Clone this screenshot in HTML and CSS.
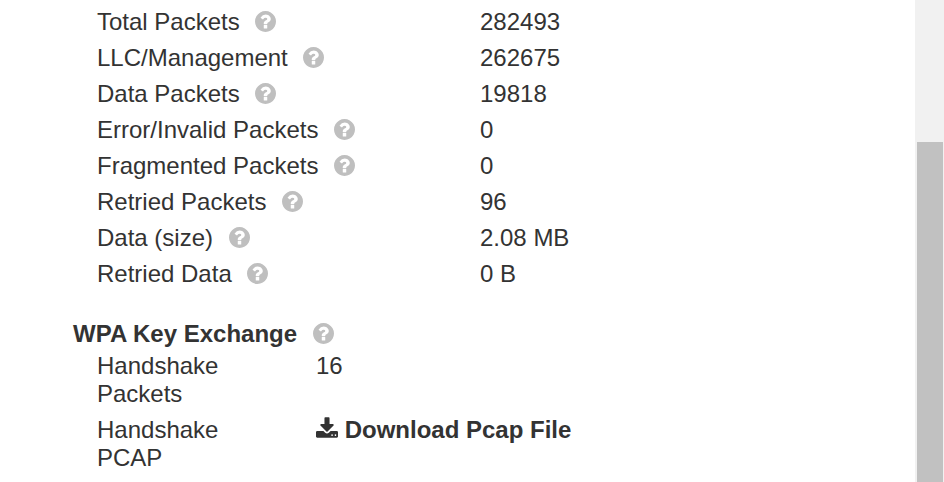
FILE: index.html
```html
<!DOCTYPE html>
<html lang="en">
<head>
<meta charset="utf-8">
<title>Device Details</title>
<link rel="stylesheet" href="styles.css">
</head>
<body>
<svg class="sprite" aria-hidden="true">
  <symbol id="help" viewBox="0 0 1536 1536"><path d="M896 1248v-192q0-14-9-23t-23-9H672q-14 0-23 9t-9 23v192q0 14 9 23t23 9h192q14 0 23-9t9-23zm256-672q0-88-55.500-163t-138.500-116-170-41q-243 0-371 213-15 24 8 42l132 100q7 6 19 6 16 0 25-12 53-68 86-92 34-24 86-24 48 0 85.500 26t37.500 59q0 38-20 61t-68 45q-63 28-115.500 86.500T640 892v36q0 14 9 23t23 9h192q14 0 23-9t9-23q0-19 21.500-49.500T972 829q32-18 49-28.500t46-35 44.500-48 28-60.500 12.500-81zm384 192q0 209-103 385.500T1153.500 1433 768 1536t-385.500-103T103 1153.500 0 768t103-385.500T382.500 103 768 0t385.500 103T1433 382.500 1536 768z"/></symbol>
  <symbol id="download" viewBox="0 -128 1664 1536"><path d="M1280 1216q0-26-19-45t-45-19-45 19-19 45 19 45 45 19 45-19 19-45zm256 0q0-26-19-45t-45-19-45 19-19 45 19 45 45 19 45-19 19-45zm128-224v320q0 40-28 68t-68 28H96q-40 0-68-28t-28-68V992q0-40 28-68t68-28h465l135 136q58 56 136 56t136-56l136-136h464q40 0 68 28t28 68zm-325-569q17 41-14 70l-448 448q-18 19-45 19t-45-19L339 493q-31-29-14-70 17-39 59-39h256V-64q0-26 19-45t45-19h256q26 0 45 19t19 45v448h256q42 0 59 39z"/></symbol>
</svg>
<main class="panel">
  <table class="stats">
    <tbody>
      <tr><th scope="row">Total Packets <svg class="help"><use href="#help"/></svg></th><td>282493</td></tr>
      <tr><th scope="row">LLC/Management <svg class="help"><use href="#help"/></svg></th><td>262675</td></tr>
      <tr><th scope="row">Data Packets <svg class="help"><use href="#help"/></svg></th><td>19818</td></tr>
      <tr><th scope="row">Error/Invalid Packets <svg class="help"><use href="#help"/></svg></th><td>0</td></tr>
      <tr><th scope="row">Fragmented Packets <svg class="help"><use href="#help"/></svg></th><td>0</td></tr>
      <tr><th scope="row">Retried Packets <svg class="help"><use href="#help"/></svg></th><td>96</td></tr>
      <tr><th scope="row">Data (size) <svg class="help"><use href="#help"/></svg></th><td>2.08 MB</td></tr>
      <tr><th scope="row">Retried Data <svg class="help"><use href="#help"/></svg></th><td>0 B</td></tr>
    </tbody>
  </table>
  <h2 class="heading">WPA Key Exchange <svg class="help"><use href="#help"/></svg></h2>
  <table class="stats exchange">
    <tbody>
      <tr><th scope="row">Handshake Packets</th><td>16</td></tr>
      <tr><th scope="row">Handshake PCAP</th><td><a class="download" href="#pcap"><svg class="save"><use href="#download"/></svg> Download Pcap File</a></td></tr>
    </tbody>
  </table>
</main>
<div class="scrollbar" aria-hidden="true"><div class="thumb"></div></div>
</body>
</html>
```

FILE: styles.css
```css
* {
  box-sizing: border-box;
}

body {
  margin: 0;
  display: flex;
  min-height: 100vh;
  overflow: hidden;
  background: #fff;
  color: #333;
  font: 24px/28px "Liberation Sans", Arial, sans-serif;
}

.sprite {
  display: none;
}

.panel {
  flex: 1;
  padding: 4px 0 0 73px;
}

.stats {
  width: 100%;
  table-layout: fixed;
  border-collapse: collapse;
}

.stats th,
.stats td {
  padding: 4px 0;
  font-weight: normal;
  text-align: left;
  vertical-align: top;
}

.stats th {
  width: 407px;
  padding-left: 24px;
}

.exchange th {
  width: 243px;
  padding-right: 80px;
}

.help {
  display: inline-block;
  width: 21px;
  height: 21px;
  margin-left: 9px;
  vertical-align: -2px;
  fill: #bfbfbf;
}

.heading {
  margin: 28px 0 0;
  font-size: 24px;
  line-height: 28px;
}

.download {
  color: inherit;
  font-weight: bold;
  text-decoration: none;
}

.save {
  width: 22px;
  height: 21px;
  vertical-align: baseline;
  fill: currentColor;
}

.scrollbar {
  width: 29px;
  padding: 142px 1px 0 2px;
  display: flex;
  background: #f1f1f1;
}

.thumb {
  flex: 1;
  background: #c1c1c1;
}
```
